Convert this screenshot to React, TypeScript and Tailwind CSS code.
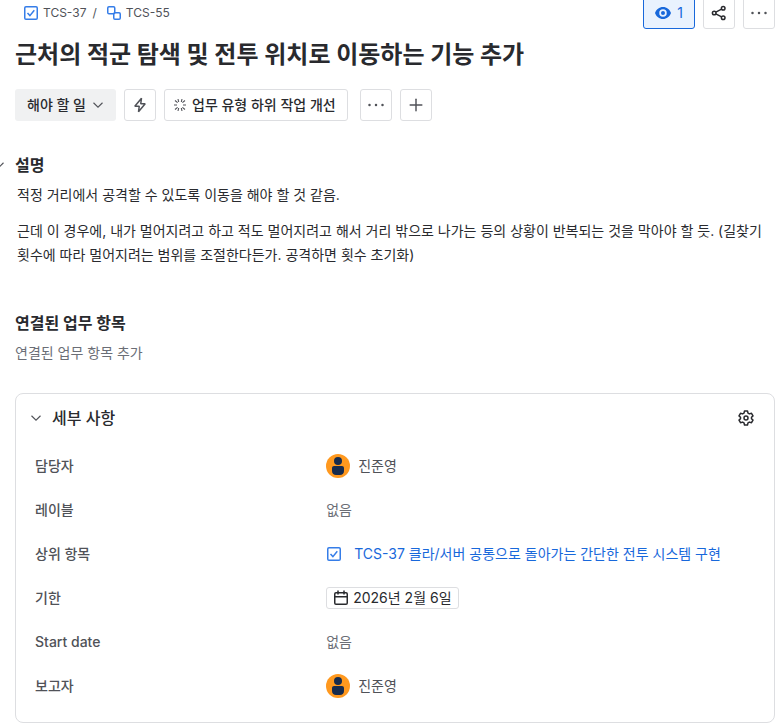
import type { ReactNode } from 'react';
import { Plus } from 'lucide-react';

const reporter = '진준영';

const TaskIcon = () => (
    <svg viewBox="0 0 16 16" fill="none" className="size-4 shrink-0" aria-hidden="true">
        <rect x="1.75" y="1.75" width="12.5" height="12.5" rx="1.25" stroke="#357DE8" strokeWidth="1.5" />
        <path d="m4.5 8 2.4 2.6 4.4-5.4" stroke="#357DE8" strokeWidth="1.5" />
    </svg>
);

const SubtaskIcon = () => (
    <svg viewBox="0 0 16 16" fill="none" className="size-4 shrink-0" aria-hidden="true">
        <rect x="1.75" y="1.75" width="7" height="7" rx="1.25" stroke="#357DE8" strokeWidth="1.5" />
        <rect x="7.75" y="7.75" width="6.5" height="6.5" rx="1.25" stroke="#357DE8" strokeWidth="1.5" />
    </svg>
);

const ChevronIcon = () => (
    <svg viewBox="0 0 12 12" fill="none" className="size-3 shrink-0" aria-hidden="true">
        <path d="m1.5 3.75 4.5 4.5 4.5-4.5" stroke="#505258" strokeWidth="1.1" />
    </svg>
);

const DotsIcon = () => (
    <svg viewBox="0 0 16 16" fill="#505258" className="size-4" aria-hidden="true">
        <circle cx="1.5" cy="8" r="1.25" />
        <circle cx="8" cy="8" r="1.25" />
        <circle cx="14.5" cy="8" r="1.25" />
    </svg>
);

const EyeIcon = () => (
    <svg viewBox="0 0 16 16" className="size-4" aria-hidden="true">
        <path
            fill="#1868DB"
            fillRule="evenodd"
            d="M8 2C4.2 2 1.3 4.4 0 8c1.3 3.6 4.2 6 8 6s6.7-2.4 8-6c-1.300-3.600-4.200-6-8-6Zm0 2.250a3.750 3.750 0 1 1 0 7.500 3.750 3.750 0 0 1 0-7.500ZM8 6a2 2 0 1 0 0 4 2 2 0 0 0 0-4Z"
        />
    </svg>
);

const ShareIcon = () => (
    <svg viewBox="0 0 16 16" fill="none" stroke="#292A2E" strokeWidth="1.5" className="size-4" aria-hidden="true">
        <circle cx="3.2" cy="8" r="1.8" />
        <circle cx="12.2" cy="3.2" r="1.8" />
        <circle cx="12.2" cy="12.8" r="1.8" />
        <path d="m4.800 7.100 5.800-3M4.800 8.900l5.800 3" />
    </svg>
);

const BoltIcon = () => (
    <svg viewBox="0 0 16 16" fill="none" className="size-4" aria-hidden="true">
        <path
            d="M9.5 1.2 2.8 9.250h4.450L6.500 14.800l6.700-8.050H8.750L9.500 1.200Z"
            stroke="#505258"
            strokeWidth="1.5"
            strokeLinejoin="bevel"
        />
    </svg>
);

const SparkIcon = () => (
    <svg viewBox="0 0 16 16" fill="none" className="size-4 shrink-0" aria-hidden="true">
        <path
            d="m6 2 .7 3M10 2l-.7 3M6 14l.7-3M10 14l-.7-3M2 8h3M11 8h3M3 3.500l2.600 2.100M13 3.500l-2.600 2.100M3 12.500l2.600-2.100M13 12.500l-2.600-2.100"
            stroke="#505258"
            strokeWidth="1.1"
        />
    </svg>
);

const CalendarIcon = () => (
    <svg viewBox="0 0 16 16" fill="none" stroke="#292A2E" strokeWidth="1.5" className="size-4 shrink-0" aria-hidden="true">
        <rect x="1.75" y="2.75" width="12.5" height="11.5" rx="1.25" />
        <path d="M1.75 6.75h12.5M5 .5v4M11 .5v4" />
    </svg>
);

const GearIcon = () => (
    <svg viewBox="0 0 16 16" fill="none" stroke="#292A2E" strokeWidth="1.5" strokeLinejoin="round" className="size-4" aria-hidden="true">
        <path d="M6.5 1h3l.5 2.100 1.400.8 2.100-.6 1.500 2.600L13.500 7.300v1.400l1.500 1.400-1.500 2.600-2.100-.6-1.400.8-.5 2.100h-3L6 12.900l-1.400-.8-2.100.6L1 10.100l1.500-1.400V7.300L1 5.900l1.500-2.600 2.100.6 1.400-.8L6.500 1Z" />
        <circle cx="8" cy="8" r="2" />
    </svg>
);

const Avatar = () => (
    <svg viewBox="0 0 24 24" className="size-6 shrink-0" aria-hidden="true">
        <circle cx="12" cy="12" r="12" fill="#FF991F" />
        <circle cx="12" cy="7" r="4" fill="#172B4D" />
        <path d="M6 14c0-1.100.9-2 2-2h8c1.100 0 2 .9 2 2v3c0 2.500-1.800 4-4 4h-4c-2.200 0-4-1.500-4-4v-3Z" fill="#172B4D" />
    </svg>
);

const IconButton = ({ label, children }: { label: string; children: ReactNode }) => (
    <button
        type="button"
        aria-label={label}
        className="flex size-8 shrink-0 items-center justify-center rounded-[3px] border border-[#dddee1] bg-white text-[#505258] hover:bg-gray-50"
    >
        {children}
    </button>
);

const User = () => (
    <span className="flex items-center gap-2">
        <Avatar />
        {reporter}
    </span>
);

const Empty = () => <span className="text-[#6b6e76]">없음</span>;

const fields: { label: string; value: ReactNode }[] = [
    { label: '담당자', value: <User /> },
    { label: '레이블', value: <Empty /> },
    {
        label: '상위 항목',
        value: (
            <a href="#TCS-37" className="flex items-center gap-3 text-[#1868db] hover:underline">
                <TaskIcon />
                TCS-37 클라/서버 공통으로 돌아가는 간단한 전투 시스템 구현
            </a>
        ),
    },
    {
        label: '기한',
        value: (
            <button
                type="button"
                className="flex h-[22px] items-center gap-1 rounded-[3px] border border-[#dddee1] px-1.5 text-[#292a2e]"
            >
                <CalendarIcon />
                2026년 2월 6일
            </button>
        ),
    },
    { label: 'Start date', value: <Empty /> },
    { label: '보고자', value: <User /> },
];

const App = () => {
    return (
        <main className="bg-white pr-[7px] pb-[5px] pl-[15px] font-[Inter,'Noto_Sans_CJK_KR',sans-serif] text-sm leading-5 break-keep text-[#292a2e]">
            {/* Breadcrumbs and page actions */}
            <header className="flex h-[29px] items-end justify-between overflow-hidden">
                <nav className="flex h-8 items-center pl-2 text-xs text-[#505258]">
                    <a href="#TCS-37" className="flex items-center gap-1 hover:underline">
                        <TaskIcon />
                        TCS-37
                    </a>
                    <span className="px-1.5">/</span>
                    <a href="#TCS-55" className="flex items-center gap-1 pl-[3px] hover:underline">
                        <SubtaskIcon />
                        TCS-55
                    </a>
                </nav>
                <div className="flex gap-2">
                    <button
                        type="button"
                        aria-label="보기"
                        className="flex h-8 w-[52px] items-center justify-center gap-1.5 rounded-[3px] border border-[#1868db] bg-[#e9f2fe] text-[#1868db]"
                    >
                        <EyeIcon />
                        1
                    </button>
                    <IconButton label="공유">
                        <ShareIcon />
                    </IconButton>
                    <IconButton label="작업">
                        <DotsIcon />
                    </IconButton>
                </div>
            </header>

            <h1 className="mt-3 text-2xl leading-7 font-bold">근처의 적군 탐색 및 전투 위치로 이동하는 기능 추가</h1>

            <div className="mt-5 flex flex-wrap gap-2">
                <button
                    type="button"
                    className="flex h-8 items-center gap-1.5 rounded-[3px] bg-[#f0f1f2] px-3 font-medium"
                >
                    해야 할 일
                    <ChevronIcon />
                </button>
                <IconButton label="자동화">
                    <BoltIcon />
                </IconButton>
                <button
                    type="button"
                    className="mr-1 flex h-8 items-center gap-1 rounded-[3px] border border-[#dddee1] pr-[11px] pl-[7px] font-medium"
                >
                    <SparkIcon />
                    업무 유형 하위 작업 개선
                </button>
                <IconButton label="더 보기">
                    <DotsIcon />
                </IconButton>
                <IconButton label="추가">
                    <Plus className="size-5" strokeWidth={1.75} />
                </IconButton>
            </div>

            {/* Description */}
            <section className="mt-8">
                <div className="-ml-[22px] flex items-center gap-2.5">
                    <button type="button" aria-label="설명 접기">
                        <ChevronIcon />
                    </button>
                    <h2 className="text-base leading-6 font-bold">설명</h2>
                </div>
                <div className="mt-1.5 space-y-3 pl-0.5 leading-6">
                    <p>적정 거리에서 공격할 수 있도록 이동을 해야 할 것 같음.</p>
                    <p>
                        근데 이 경우에, 내가 멀어지려고 하고 적도 멀어지려고 해서 거리 밖으로 나가는 등의 상황이 반복되는 것을
                        막아야 할 듯. (길찾기 횟수에 따라 멀어지려는 범위를 조절한다든가. 공격하면 횟수 초기화)
                    </p>
                </div>
            </section>

            {/* Linked work items */}
            <section className="mt-11">
                <h2 className="text-base leading-6 font-bold">연결된 업무 항목</h2>
                <button type="button" className="mt-2 text-[#6b6e76] hover:underline">
                    연결된 업무 항목 추가
                </button>
            </section>

            {/* Details */}
            <section className="mt-[30px] rounded-lg border border-[#dddee1] pt-2 pr-[11px] pb-3.5 pl-[14px]">
                <div className="flex h-8 items-center justify-between">
                    <button type="button" className="flex items-center gap-2.5 text-base leading-6 font-medium">
                        <ChevronIcon />
                        세부 사항
                    </button>
                    <button type="button" aria-label="필드 구성" className="mr-[9px]">
                        <GearIcon />
                    </button>
                </div>
                <dl className="mt-2.5 pl-[5px] text-[#505258]">
                    {fields.map((field) => (
                        <div key={field.label} className="grid min-h-11 grid-cols-[2fr_3fr] items-center">
                            <dt className="font-medium">{field.label}</dt>
                            <dd className="flex">{field.value}</dd>
                        </div>
                    ))}
                </dl>
            </section>
        </main>
    );
};

export default App;
